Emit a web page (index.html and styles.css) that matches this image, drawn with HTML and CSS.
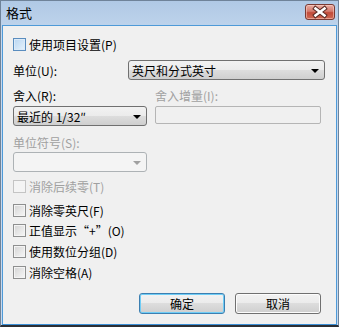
FILE: index.html
```html
<!DOCTYPE html>
<html lang="zh-CN">
<head>
    <meta charset="UTF-8">
    <title>格式</title>
    <link rel="stylesheet" href="styles.css">
</head>
<body>
    <div class="window">
        <div class="titlebar">
            <span class="title">格式</span>
            <span class="close">
                <svg width="28" height="14" viewBox="0 0 28 14">
                    <path d="M9.5 3.5 L18.5 10.5 M18.5 3.5 L9.5 10.5" stroke="#5a2a24" stroke-width="4.6" stroke-linecap="square" fill="none"/>
                    <path d="M9.5 3.5 L18.5 10.5 M18.5 3.5 L9.5 10.5" stroke="#fff" stroke-width="2.6" stroke-linecap="square" fill="none"/>
                </svg>
            </span>
        </div>
        <div class="client">
            <div class="check"><span class="box box-hot"></span>使用项目设置(P)</div>

            <div class="unit-row">
                <span>单位(U):</span>
                <div class="combo combo-wide"><span>英尺和分式英寸</span><i class="arrow"></i></div>
            </div>

            <div class="round-grid">
                <span class="label">舍入(R):</span>
                <span class="label muted">舍入增量(I):</span>
                <div class="combo"><span>最近的 1/32″</span><i class="arrow"></i></div>
                <div class="field"></div>
            </div>

            <span class="label muted symbol-label">单位符号(S):</span>
            <div class="combo combo-off"><span></span><i class="arrow"></i></div>

            <div class="check check-off first"><span class="box"></span>消除后续零(T)</div>
            <div class="check step-24"><span class="box"></span>消除零英尺(F)</div>
            <div class="check step-20"><span class="box"></span>正值显示“+”(O)</div>
            <div class="check step-21"><span class="box"></span>使用数位分组(D)</div>
            <div class="check step-21"><span class="box"></span>消除空格(A)</div>

            <div class="buttons">
                <button class="btn btn-default">确定</button>
                <button class="btn">取消</button>
            </div>
        </div>
    </div>
</body>
</html>
```

FILE: styles.css
```css
body {
    margin: 0;
    padding: 0;
    background-color: #fff;
    font-family: "Noto Sans CJK SC", "Liberation Sans", sans-serif;
    font-size: 12px;
    color: #000;
}
.window {
    width: 339px;
    height: 327px;
    box-sizing: border-box;
    border: 1px solid #6f8399;
    border-bottom: 2px solid #2b2f35;
    padding: 0 1px;
    background: linear-gradient(#b0c9e5, #c6d9ef 40px, #c6d9ef);
    display: flex;
    flex-direction: column;
}
.titlebar {
    height: 24px;
    display: flex;
    align-items: center;
    justify-content: space-between;
    padding: 0 2px 0 4px;
    flex-shrink: 0;
}
.title {
    font-size: 13px;
    color: #000;
    margin-top: -1px;
}
.close {
    width: 28px;
    height: 14px;
    border: 1px solid #7a3a33;
    border-radius: 3px;
    background: linear-gradient(#e9aca2, #d47a6c 45%, #c24b39 55%, #cf6a55);
    box-shadow: inset 0 0 0 1px rgba(255, 220, 210, 0.5);
    margin-top: -3px;
    display: flex;
}
.client {
    flex: 1;
    border: 1px solid #4e9ad8;
    border-bottom-color: #3b8fd6;
    background-color: #f0f0f0;
    padding: 12px 15px 0 10px;
    display: flex;
    flex-direction: column;
    align-items: flex-start;
}
.check {
    display: flex;
    align-items: center;
    height: 13px;
    line-height: 13px;
    white-space: nowrap;
}
.box {
    width: 13px;
    height: 13px;
    box-sizing: border-box;
    border: 1px solid #8e8f8f;
    background: linear-gradient(135deg, #d4d4d4, #f7f7f7);
    box-shadow: inset 0 0 0 1px #f4f4f4;
    margin-right: 3px;
    flex-shrink: 0;
}
.box-hot {
    border-color: #5a8dbf;
    background: linear-gradient(135deg, #b9d6f2, #e6f2fc);
    box-shadow: inset 0 0 0 1px #dbeaf8;
}
.check-off {
    color: #a0a0a0;
}
.check-off .box {
    border-color: #c4c4c4;
    background: #f4f4f4;
    box-shadow: none;
}
.first {
    margin-top: 8px;
}
.step-24 {
    margin-top: 11px;
}
.step-20 {
    margin-top: 7px;
}
.step-21 {
    margin-top: 8px;
}
.unit-row {
    margin-top: 9px;
    display: flex;
    align-items: center;
}
.unit-row > span {
    width: 115px;
}
.combo {
    height: 20px;
    box-sizing: border-box;
    border: 1px solid #707070;
    border-radius: 3px;
    background: linear-gradient(#f2f2f2, #ebebeb 50%, #dddddd 50%, #cfcfcf);
    display: flex;
    align-items: center;
    justify-content: space-between;
    padding: 0 5px 0 3px;
    width: 134px;
    white-space: nowrap;
}
.combo-wide {
    width: 197px;
}
.arrow {
    width: 0;
    height: 0;
    border-left: 4px solid transparent;
    border-right: 4px solid transparent;
    border-top: 4px solid #000;
    margin-top: 1px;
}
.combo-off {
    margin-top: 2px;
    border-color: #adb2b5;
    background: #f4f4f4;
}
.combo-off .arrow {
    border-top-color: #a0a0a0;
}
.round-grid {
    margin-top: 9px;
    display: grid;
    grid-template-columns: 134px 166px;
    column-gap: 8px;
    row-gap: 3px;
    align-items: start;
}
.label {
    line-height: 14px;
    white-space: nowrap;
}
.muted {
    color: #a0a0a0;
}
.field {
    height: 18px;
    box-sizing: border-box;
    border: 1px solid #b5b5b5;
    border-radius: 2px;
    background-color: #f0f0f0;
}
.symbol-label {
    margin-top: 10px;
}
.buttons {
    margin-top: 14px;
    align-self: stretch;
    display: flex;
    justify-content: flex-end;
    gap: 10px;
}
.btn {
    width: 86px;
    height: 21px;
    box-sizing: border-box;
    border: 1px solid #707070;
    border-radius: 3px;
    background: linear-gradient(#f2f2f2, #ebebeb 50%, #dddddd 50%, #cfcfcf);
    box-shadow: inset 0 0 0 1px #fcfcfc;
    font-family: "Noto Sans CJK SC", "Liberation Sans", sans-serif;
    font-size: 12px;
    color: #000;
    padding: 0;
    line-height: 17px;
}
.btn-default {
    border-color: #3c7fb1;
    box-shadow: inset 0 0 0 1px #6fcdf6;
}
```
